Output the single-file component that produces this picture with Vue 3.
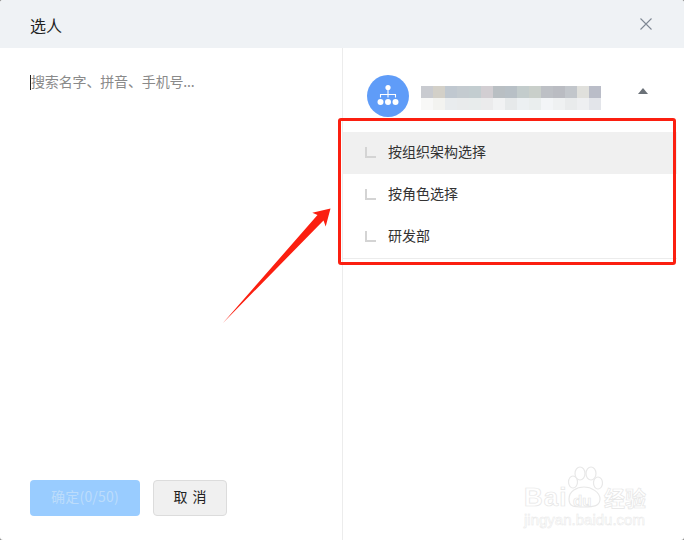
<script setup>
const topCells = ['#c9cbd0','#d3d0c8','#c0c8d0','#c4cbd0','#c3cdd0','#d2ced2','#b9bfc3','#b8c0c6','#c3cccc','#c9cfca','#bdc0c5','#babcc2','#c2c6cb','#e0e0dc','#babdc8']
const bottomCells = ['#f8f8f7','#f3f3f0','#e9ecee','#e9ebec','#e8ecec','#ebebec','#f1f2f3','#e6e9ea','#ecf0f2','#eaeeee','#f3f5f7','#eff1f2','#e9ebec','#eeeff1','#e3e5ea']
const items = ['按组织架构选择', '按角色选择', '研发部']
</script>

<template>
  <div class="dialog">
    <header class="head">
      <span class="title">选人</span>
      <svg class="close" width="12" height="12" viewBox="0 0 12 12" aria-hidden="true">
        <path d="M.5.5l11 11M11.5.5l-11 11" stroke="#7f8894" stroke-width="1.100" fill="none" />
      </svg>
    </header>
    <div class="body">
      <section class="left">
        <div class="search"><i class="caret"></i><span class="hint">搜索名字、拼音、手机号...</span></div>
        <div class="actions">
          <button class="ok"><span>确定(0/50)</span></button>
          <button class="cancel"><span>取 消</span></button>
        </div>
      </section>
      <section class="right">
        <div class="org">
          <span class="avatar">
            <svg width="24" height="24" viewBox="0 0 24 24" aria-hidden="true">
              <circle cx="12" cy="3.500" r="2.600" fill="#fff" />
              <path d="M12 6v4.500M4.500 13.500v-3h15v3M12 10.500v3" stroke="#fff" stroke-width="1.100" fill="none" />
              <circle cx="4.500" cy="18" r="3" fill="#fff" />
              <circle cx="12" cy="18" r="3" fill="#fff" />
              <circle cx="19.500" cy="18" r="3" fill="#fff" />
            </svg>
          </span>
          <div class="blur">
            <div class="cells"><i v-for="(c, n) in topCells" :key="n" :style="{ background: c }"></i></div>
            <div class="cells"><i v-for="(c, n) in bottomCells" :key="n" :style="{ background: c }"></i></div>
          </div>
          <span class="tri"></span>
        </div>
        <ul class="menu">
          <li v-for="(t, n) in items" :key="t" :class="{ on: n === 0 }">
            <i class="ell"></i>
            <span>{{ t }}</span>
          </li>
        </ul>
      </section>
    </div>

    <div class="redbox"></div>
    <svg class="arrow" width="684" height="540" viewBox="0 0 684 540" aria-hidden="true">
      <path d="M222.500 323.500L317.500 215L312.300 212.700L330.500 208.500L325.700 226.500L323.500 220.500Z" fill="#fb1f10" />
    </svg>

    <div class="mark">
      <svg class="paw" width="36" height="42" viewBox="0 0 36 42" aria-hidden="true">
        <g fill="#fff" stroke="#e8e8e8" stroke-width="1.200">
          <ellipse cx="6" cy="16" rx="4.500" ry="6" />
          <ellipse cx="13" cy="7.500" rx="5" ry="6.500" />
          <ellipse cx="24" cy="7.500" rx="5" ry="6.500" />
          <ellipse cx="31" cy="17" rx="4.500" ry="6" />
          <path d="M2 33c0-8 8-12 15-12s16 5 16 12-6 8-16 8-15 0-15-8z" />
        </g>
      </svg>
      <div class="word"><span class="b">Bai</span><span class="du">du</span><span class="cn">经验</span></div>
      <div class="url">jingyan.baidu.com</div>
    </div>
  </div>
</template>

<style>
html, body { margin: 0; background: #8c8c8c; overflow: hidden; }
</style>

<style scoped>
.dialog {
  position: relative;
  width: 684px;
  height: 540px;
  background: #fff;
  border-radius: 3px;
  overflow: hidden;
  display: flex;
  flex-direction: column;
  font-family: "Noto Sans CJK SC", "Liberation Sans", sans-serif;
  color: #333;
}
.head {
  height: 48px;
  flex: none;
  background: #eff2f5;
  display: flex;
  align-items: center;
  justify-content: space-between;
  padding: 0 32px 0 30px;
}
.title { font-size: 16px; line-height: 22px; padding-top: 2px; color: #222; }
.close { margin-top: -1px; }
.body { flex: 1; display: flex; min-height: 0; }
.left {
  width: 343px;
  flex: none;
  box-sizing: border-box;
  border-right: 1px solid #ececec;
  padding: 24px 0 24px 30px;
  display: flex;
  flex-direction: column;
  justify-content: space-between;
}
.search {
  display: flex;
  align-items: center;
  height: 20px;
  font-size: 14px;
  line-height: 20px;
  color: #8a8a8a;
}
.hint { margin-top: -3px; letter-spacing: -.15px; }
.caret { width: 1px; height: 15px; background: #222; flex: none; }
.actions { display: flex; gap: 13px; }
button {
  height: 36px;
  border-radius: 4px;
  font: inherit;
  font-size: 14px;
  padding: 0 0 4px;
  box-sizing: border-box;
}
.ok { width: 110px; border: 0; background: #99ccff; color: #bcdcfb; letter-spacing: .2px; }
.cancel { width: 74px; border: 1px solid #dcdcdc; background: #f0f0f0; color: #222; word-spacing: 2px; }
.right { flex: 1; min-width: 0; }
.org {
  height: 84px;
  display: flex;
  align-items: center;
  padding: 12px 36px 0 24px;
  box-sizing: border-box;
}
.avatar {
  width: 42px;
  height: 42px;
  flex: none;
  border-radius: 50%;
  background: #5f9cf8;
  display: flex;
  align-items: center;
  justify-content: center;
}
.blur { width: 180px; margin: 4px 0 0 12px; flex: none; }
.cells { display: flex; height: 12px; }
.cells i { flex: 1; display: block; }
.tri {
  margin-left: 37px;
  margin-top: -11px;
  width: 0;
  height: 0;
  border-left: 5px solid transparent;
  border-right: 5px solid transparent;
  border-bottom: 6px solid #6b7178;
}
.menu {
  list-style: none;
  margin: 0 7px 0 0;
  padding: 0;
  border-bottom: 1px solid #ececec;
}
li {
  height: 42px;
  display: flex;
  align-items: center;
  padding-left: 22px;
  font-size: 14px;
  color: #333;
}
li.on { background: #f0f0f0; }
li span { margin-top: -4px; }
.ell {
  width: 9px;
  height: 9px;
  margin-right: 12px;
  margin-top: -1px;
  border-left: 2px solid #d4d4d4;
  border-bottom: 2px solid #d4d4d4;
  flex: none;
}
.redbox {
  position: absolute;
  left: 338px;
  top: 118px;
  width: 332px;
  height: 141px;
  border: 3px solid #fb1f10;
  border-radius: 3px;
}
.arrow { position: absolute; left: 0; top: 0; pointer-events: none; }
.mark {
  position: absolute;
  left: 524px;
  top: 465px;
  width: 126px;
  height: 60px;
  color: #fff;
  -webkit-text-stroke: .7px #e6e6e6;
  font-family: "Liberation Sans", "Noto Sans CJK SC", sans-serif;
  font-weight: 700;
}
.paw { position: absolute; left: 43px; top: 1px; }
.word {
  position: absolute;
  left: 0;
  top: 19px;
  display: flex;
  align-items: baseline;
  font-size: 26px;
  line-height: 26px;
  white-space: nowrap;
}
.b { width: 48px; letter-spacing: 1px; }
.du { width: 32px; font-size: 15px; padding-left: 1px; box-sizing: border-box; }
.cn { font-size: 21px; font-family: "Noto Sans CJK SC", sans-serif; margin-left: 0; }
.url {
  position: absolute;
  left: 0;
  top: 46px;
  font-size: 15px;
  line-height: 18px;
  font-weight: 400;
  -webkit-text-stroke: .5px #e8e8e8;
  white-space: nowrap;
}
</style>
